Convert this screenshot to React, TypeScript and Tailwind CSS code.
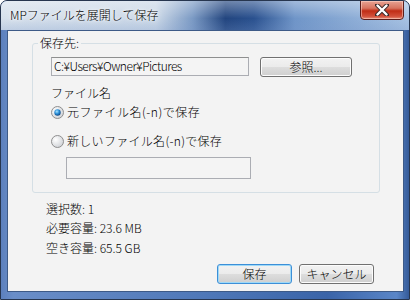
import React from "react";

const font = { fontFamily: '"Noto Sans CJK JP", "Noto Sans", sans-serif' };

function Radio({ checked }: { checked?: boolean }) {
  return (
    <svg width="13" height="13" viewBox="0 0 13 13" className="shrink-0">
      <defs>
        <radialGradient id={checked ? "rg1" : "rg0"} cx="0.35" cy="0.35" r="0.8">
          <stop offset="0" stopColor="#ffffff" />
          <stop offset="1" stopColor="#c9ccd1" />
        </radialGradient>
        <radialGradient id="dot" cx="0.4" cy="0.35" r="0.7">
          <stop offset="0" stopColor="#a9e4ff" />
          <stop offset="0.5" stopColor="#2a8fd8" />
          <stop offset="1" stopColor="#0a3e7a" />
        </radialGradient>
      </defs>
      <circle cx="6.5" cy="6.5" r="6" fill={`url(#${checked ? "rg1" : "rg0"})`} stroke="#8f8f8f" strokeWidth="1" />
      {checked && <circle cx="6.5" cy="6.5" r="3.2" fill="url(#dot)" />}
    </svg>
  );
}

function Btn({ children, def, w }: { children: React.ReactNode; def?: boolean; w: string }) {
  return (
    <div
      className={`${w} h-[20px] flex items-center justify-center rounded-[3px] text-[12px] text-black border ${
        def ? "border-[#3c8fd8] shadow-[inset_0_0_0_1px_#9fd9f7]" : "border-[#707070] shadow-[inset_0_0_0_1px_#fcfcfc]"
      } bg-[linear-gradient(to_bottom,#f2f2f2_0%,#ebebeb_50%,#dddddd_51%,#cfcfcf_100%)]`}
      style={font}
    >
      {children}
    </div>
  );
}

export default function App() {
  return (
    <div className="w-[410px] h-[300px] bg-white font-light" style={font}>
      <div className="w-[410px] h-[300px] rounded-t-[7px] border border-[#27364f] bg-[linear-gradient(to_right,#5c80bd_0%,#6a8ec8_3%,#4f78b8_50%,#3a64a8_80%,#5a86c8_97%,#345a98_100%)] flex flex-col overflow-hidden relative">
        {/* title bar */}
        <div className="h-[29px] shrink-0 relative bg-[linear-gradient(to_right,#d7e1ec_0%,#cbd8e7_38%,#7b9ac4_47%,#22457f_55%,#2a518f_62%,#6f95c8_72%,#a8c3e3_100%)]">
          <div className="absolute inset-0 bg-[linear-gradient(to_bottom,rgba(255,255,255,0.35)_0%,rgba(255,255,255,0)_60%,rgba(120,150,200,0.25)_100%)]" />
          <div className="absolute left-[9px] top-[6px] text-[12px] leading-[16px] text-black [text-shadow:0_0_6px_#ffffff,0_0_3px_#ffffff]">
            MPファイルを展開して保存
          </div>
          <div className="absolute right-[5px] top-[-1px] w-[44px] h-[20px] rounded-b-[4px] border border-[#5b1d1a] bg-[linear-gradient(to_bottom,#e8a393_0%,#d7735f_40%,#c02d16_55%,#d2503a_85%,#e6907a_100%)] flex items-center justify-center shadow-[inset_0_0_0_1px_rgba(255,220,210,0.5)]">
            <svg width="14" height="12" viewBox="0 0 14 12">
              <path d="M2 1 L12 11 M12 1 L2 11" stroke="#3a2a2a" strokeWidth="4.2" strokeLinecap="round" />
              <path d="M2.5 1.5 L11.5 10.5 M11.5 1.5 L2.5 10.5" stroke="#ffffff" strokeWidth="2.4" strokeLinecap="round" />
            </svg>
          </div>
        </div>
        {/* client */}
        <div className="flex-1 ml-[6px] mr-[5px] mb-[7px] bg-[#f3f3f3] border border-[#3d5a87] flex flex-col pl-[24px] pr-[22px] pt-[12px] text-[12px] text-black">
          {/* group box */}
          <div className="relative w-[348px] h-[150px] border border-[#d5dfe5] rounded-[3px] pl-[18px] pt-[13px] flex flex-col">
            <div className="absolute left-[5px] top-[-9px] px-[2px] bg-[#f3f3f3] leading-[16px]">保存先:</div>
            <div className="flex items-start">
              <div className="w-[198px] h-[19px] border border-[#abadb3] border-t-[#8e8f8f] bg-[#f4f4f4] px-[2px] leading-[16px] text-[12px] tracking-[-0.5px]">
                C:¥Users¥Owner¥Pictures
              </div>
              <div className="ml-[11px]">
                <Btn w="w-[92px]">参照...</Btn>
              </div>
            </div>
            <div className="mt-[7px] h-[18px] leading-[18px]">ファイル名</div>
            <div className="mt-[1px] h-[18px] flex items-center gap-[3px]">
              <Radio checked />
              <span className="tracking-[0.5px]">元ファイル名(-n)で保存</span>
            </div>
            <div className="mt-[11px] h-[18px] flex items-center gap-[3px]">
              <Radio />
              <span className="tracking-[0.3px]">新しいファイル名(-n)で保存</span>
            </div>
            <div className="mt-[7px] ml-[15px] w-[185px] h-[22px] border border-[#abadb3] bg-[#f4f4f4]" />
          </div>
          <div className="ml-[14px] mt-[8px] h-[16px] leading-[16px]">選択数: 1</div>
          <div className="ml-[14px] mt-[3px] h-[16px] leading-[16px]">必要容量: 23.6 MB</div>
          <div className="ml-[14px] mt-[4px] h-[16px] leading-[16px]">空き容量: 65.5 GB</div>
          <div className="mt-[8px] flex justify-end gap-[7px] pr-[7px]">
            <Btn def w="w-[75px]">保存</Btn>
            <Btn w="w-[75px]">キャンセル</Btn>
          </div>
        </div>
      </div>
    </div>
  );
}
